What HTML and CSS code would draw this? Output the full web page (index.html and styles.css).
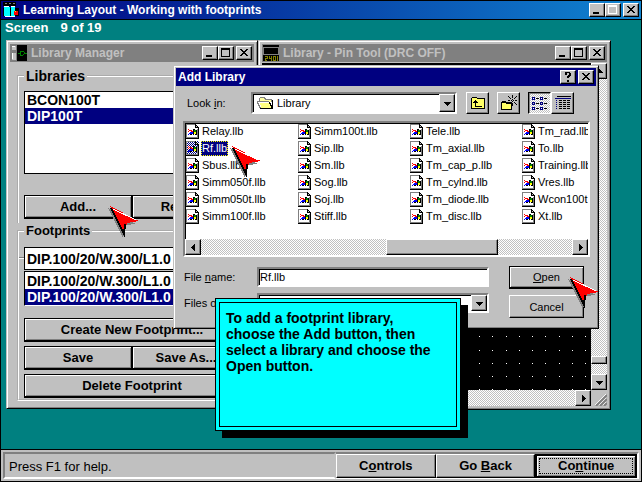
FILE: index.html
```
<!DOCTYPE html>
<html lang="en">
<head>
<meta charset="utf-8">
<title>Learning Layout - Working with footprints</title>
<link rel="stylesheet" href="styles.css">
</head>
<body>
<svg class="defs" width="0" height="0" aria-hidden="true">
  <symbol id="min" viewBox="0 0 12 10"><path d="M2 7h6v2H2z"/></symbol>
  <symbol id="max" viewBox="0 0 12 10"><path fill-rule="evenodd" d="M1 0h9v9H1zM2 2v6h7V2z"/></symbol>
  <symbol id="close" viewBox="0 0 12 10"><path d="M2 1h2v1h1v1h2V2h1V1h2v1H9v1H8v1H7v1h1v1h1v1h1v1H8V7H7V6H5v1H4v1H2V7h1V6h1V5h1V4H4V3H3V2H2z"/></symbol>
  <symbol id="down" viewBox="0 0 7 7"><path d="M0 2h7v1H6v1H5v1H4v1H3V5H2V4H1V3H0z"/></symbol>
  <symbol id="up" viewBox="0 0 7 7"><path d="M3 1h1v1h1v1h1v1h1v1H0V4h1V3h1V2h1z"/></symbol>
  <symbol id="left" viewBox="0 0 7 7"><path d="M5 0v7H4V6H3V5H2V4H1V3h1V2h1V1h1V0z"/></symbol>
  <symbol id="right" viewBox="0 0 7 7"><path d="M2 0v7h1V6h1V5h1V4h1V3H5V2H4V1H3V0z"/></symbol>
  <symbol id="doc" viewBox="0 0 13 15">
    <path fill="#808080" d="M0 0h9v1H1v13H0z"/>
    <path class="page" d="M1 1h8v3h3v10H1z"/>
    <path d="M9 0h1v1h1v1h1v1h1v12H0v-1h12V4H9z"/>
    <path fill="#c0c0c0" d="M10 2h1v1h-1z"/>
    <path fill="#808080" d="M11 5h1v9h-1zM1 13h11v1H1z"/>
    <path fill="red" d="M2 5h1v1H2zM3 6h1v1H3zM2 7h1v1H2zM4 6h2v1H4zM5 7h2v1H5z"/>
    <path fill="#008000" d="M8 6h2v2H8z"/>
    <path fill="#00f" d="M3 9h1v1H3zM2 10h1v1H2zM4 8h3v2H4z"/>
    <path fill="#ff0" d="M8 8h2v2H8z"/>
    <path d="M7 5h2v1H7zM7 6h1v5H7zM10 6h1v5h-1zM4 10h2v1H4zM9 10h1v1H9z"/>
  </symbol>
  <symbol id="pointer" viewBox="0 0 32 32">
    <path fill="#808080" d="M0 2 28 18l-10 1-3 13z"/>
    <path fill="#f00" d="M2 0 31 15l-12 2-3 13z"/>
    <path fill="none" stroke="#000" stroke-width="2" d="M3 2 16 28l1-10"/>
    <path fill="none" stroke="#fff" d="M5 3 28 14"/>
  </symbol>
</svg>

<div class="app">
  <header class="bar app-bar">
    <svg class="app-icon" viewBox="0 0 16 16"><path d="M0 0h13v4H0z"/><path fill="#808080" d="M2 1h2v1H2zM6 1h2v1H6zM10 1h2v1h-2z"/><path d="M0 6h16v8H0z"/><path fill="#0ff" d="M1 5h6v9H1zM8 5h4v9H8z"/><path fill="#fff" d="M1 4h5v1H1zM8 4h4v1H8zM2 14h10v1H2z"/><path fill="red" d="M11 9h4v4h-4z"/><path fill="#ff0" d="M12 9h1v1h-1z"/></svg>
    <h1>Learning Layout - Working with footprints</h1>
    <button class="tb" aria-label="Minimize"><svg><use href="#min"/></svg></button>
    <button class="tb off" aria-label="Maximize" disabled><svg><use href="#max"/></svg></button>
    <button class="tb close" aria-label="Close"><svg><use href="#close"/></svg></button>
  </header>

  <main class="desktop">
    <p class="progress"><span>Screen</span><span>9 of 19</span></p>

    <section class="window manager">
      <header class="bar">
        <svg class="bar-icon" viewBox="0 0 16 16"><path fill="#c0c0c0" d="M1 1h4v4H1zM1 8h4v7H1z"/><path fill="#fff" d="M1 1h3v1H1zM1 8h1v6H1z"/><path d="M6 0h10v16H6z"/><path fill="none" stroke="#008000" d="M7 8h2M9 6h3l2 2-2 2H9zM14 8h2"/></svg>
        <h2>Library Manager</h2>
        <button class="tb" aria-label="Minimize"><svg><use href="#min"/></svg></button>
        <button class="tb" aria-label="Maximize"><svg><use href="#max"/></svg></button>
        <button class="tb close" aria-label="Close"><svg><use href="#close"/></svg></button>
      </header>
      <div class="groups">
        <fieldset class="group libraries">
          <legend>Libraries</legend>
          <ul class="list tall" role="listbox" aria-label="Libraries">
            <li role="option">BCON100T</li>
            <li role="option" aria-selected="true">DIP100T</li>
          </ul>
          <div class="pair"><button class="push">Add...</button><button class="push">Remove</button></div>
        </fieldset>
        <fieldset class="group footprints">
          <legend>Footprints</legend>
          <input class="entry" type="text" aria-label="Footprint" value="DIP.100/20/W.300/L1.0">
          <ul class="list" role="listbox" aria-label="Footprints">
            <li role="option">DIP.100/20/W.300/L1.0</li>
            <li role="option" aria-selected="true">DIP.100/20/W.300/L1.0</li>
          </ul>
          <div class="stack">
            <button class="push">Create New Footprint...</button>
            <div class="pair"><button class="push">Save</button><button class="push">Save As...</button></div>
            <button class="push">Delete Footprint</button>
          </div>
        </fieldset>
      </div>
    </section>

    <section class="window pins">
      <header class="bar">
        <svg class="bar-icon" viewBox="0 0 16 16"><path d="M0 0h16v16H0z"/><path fill="#808080" d="M0 2h16v1H0zM0 9h16v1H0zM0 3h1v6H0zM15 3h1v6h-1z"/><path fill="none" stroke="#808000" d="M2 11h2v2H2v2h2M6 11v2h2M8 11v5M10 11h2v4h-2zM14 11v5"/></svg>
        <h2>Library - Pin Tool (DRC OFF)</h2>
        <button class="tb" aria-label="Minimize"><svg><use href="#min"/></svg></button>
        <button class="tb" aria-label="Maximize"><svg><use href="#max"/></svg></button>
        <button class="tb close" aria-label="Close"><svg><use href="#close"/></svg></button>
      </header>
      <div class="client">
        <div class="canvas">
          <svg class="dots" viewBox="0 0 120 60"><path fill="#fff" d="M8 6h1v1H8zM21 6h1v1h-1zM35 6h1v1h-1zM48 6h1v1h-1zM61 6h1v1h-1zM74 6h1v1h-1zM88 6h1v1h-1zM101 6h1v1h-1zM114 6h1v1h-1zM8 20h1v1H8zM21 20h1v1h-1zM35 20h1v1h-1zM48 20h1v1h-1zM61 20h1v1h-1zM74 20h1v1h-1zM88 20h1v1h-1zM101 20h1v1h-1zM114 20h1v1h-1zM8 33h1v1H8zM21 33h1v1h-1zM35 33h1v1h-1zM48 33h1v1h-1zM61 33h1v1h-1zM74 33h1v1h-1zM88 33h1v1h-1zM101 33h1v1h-1zM114 33h1v1h-1zM8 46h1v1H8zM21 46h1v1h-1zM35 46h1v1h-1zM48 46h1v1h-1zM61 46h1v1h-1zM74 46h1v1h-1zM88 46h1v1h-1zM101 46h1v1h-1zM114 46h1v1h-1zM8 59h1v1H8zM21 59h1v1h-1zM35 59h1v1h-1zM48 59h1v1h-1zM61 59h1v1h-1zM74 59h1v1h-1zM88 59h1v1h-1zM101 59h1v1h-1zM114 59h1v1h-1z"/></svg>
        </div>
        <div class="scroll vertical">
          <button class="arrow" aria-label="Scroll up"><svg><use href="#up"/></svg></button>
          <span class="thumb"></span>
          <button class="arrow" aria-label="Scroll down"><svg><use href="#down"/></svg></button>
        </div>
        <div class="scroll horizontal">
          <button class="arrow end" aria-label="Scroll right"><svg><use href="#right"/></svg></button>
        </div>
        <svg class="grip" viewBox="0 0 16 16"><path stroke="#fff" d="M4 15 15 4M8 15l7-7M12 15l3-3"/><path stroke="#808080" stroke-width="2" d="M5 16 16 5M9 16l7-7M13 16l3-3"/></svg>
      </div>
    </section>

    <section class="window dialog" role="dialog" aria-labelledby="dialog-title">
      <header class="bar">
        <h2 id="dialog-title">Add Library</h2>
        <button class="tb" aria-label="Help"><svg viewBox="0 0 12 10"><path d="M3 0h5v1h1v3H8v1H7v1H5V4h1V3h1V1H5v2H3zM5 8h2v2H5z"/></svg></button>
        <button class="tb close" aria-label="Close"><svg><use href="#close"/></svg></button>
      </header>
      <form class="dialog-body">
        <div class="look">
          <label for="look">Look <u>i</u>n:</label>
          <div class="combo">
            <svg class="folder" viewBox="0 0 17 14"><path fill="#808080" d="M2 2h1V1h5v1h1v1h6v3h-1V4H8V3H7V2H3v3H2zM0 5h12v1H1v1h1v2h1v2h1v2H3v-1H2v-2H1V8H0z"/><path fill="#ffffa0" d="M3 2h4v1h1v1h6v2h-2V5H3z"/><path fill="#ffff80" d="M1 6h11v2h1v2h1v2H4v-1H3V9H2V7H1z"/><path fill="#fff" d="M1 6h11v1H1zM2 7h1v2H2zM3 9h1v2H3z"/><path d="M15 4h1v9H3v-1h11v-2h-1V8h-1V6h1v1h1v2h1z"/></svg>
            <select id="look"><option>Library</option></select>
            <span class="drop"><svg><use href="#down"/></svg></span>
          </div>
          <button type="button" class="tool" aria-label="Up one level"><svg viewBox="0 0 18 16"><path d="M2 3h1V2h5v1h8v11H2z"/><path fill="#ff6" d="M3 3h5v1h7v9H3z"/><path d="M6 5h1v1h1v1h1v1H7v3h6v1H6V8H4V7h1V6h1z"/></svg></button>
          <button type="button" class="tool new" aria-label="New folder"><svg viewBox="0 0 18 16"><path d="M1 7h1V6h4v1h6v8H1z"/><path fill="#ff6" d="M2 8h4v1h5v5H2z"/><path d="M12 0h1v3h-1zM8 1h1v1H8zM9 2h1v1H9zM10 3h1v1h-1zM16 1h1v1h-1zM15 2h1v1h-1zM14 3h1v1h-1zM8 5h2v1H8zM11 5h1v1h-1zM13 5h1v1h-1zM15 5h2v1h-2zM12 4h1v1h-1zM12 6h1v1h-1zM14 7h1v1h-1zM15 8h1v1h-1zM16 9h1v1h-1zM12 8h1v3h-1z"/></svg></button>
          <div class="views">
            <button type="button" class="tool pressed" aria-label="List"><svg viewBox="0 0 18 16"><path fill="#000080" fill-rule="evenodd" d="M1 2h3v3H1zM2 3v1h1V3zM9 2h3v3H9zM10 3v1h1V3zM1 7h3v3H1zM2 8v1h1V8zM9 7h3v3H9zM10 8v1h1V8zM1 12h3v3H1zM2 13v1h1v-1zM9 12h3v3H9zM10 13v1h1v-1z"/><path d="M5 3h3v1H5zM13 3h3v1h-3zM5 8h3v1H5zM13 8h3v1h-3zM5 13h3v1H5zM13 13h3v1h-3z"/></svg></button>
            <button type="button" class="tool" aria-label="Details"><svg viewBox="0 0 18 16"><path d="M3 1h14v1H3zM5 5h3v1H5zM9 5h3v1H9zM13 5h3v1h-3zM5 7h3v1H5zM9 7h3v1H9zM13 7h3v1h-3zM5 9h3v1H5zM9 9h3v1H9zM13 9h3v1h-3zM5 11h3v1H5zM9 11h3v1H9zM13 11h3v1h-3zM5 13h3v1H5zM9 13h3v1H9zM13 13h3v1h-3z"/><path fill="#000080" d="M1 3h16v1H1zM2 5h1v1H2zM2 7h1v1H2zM2 9h1v1H2zM2 11h1v1H2zM2 13h1v1H2z"/></svg></button>
          </div>
        </div>

        <div class="browser">
          <ul class="files" role="listbox" aria-label="Files">
            <li><svg><use href="#doc"/></svg><span>Relay.llb</span></li>
            <li class="picked"><svg><use href="#doc"/></svg><span>Rf.llb</span></li>
            <li><svg><use href="#doc"/></svg><span>Sbus.llb</span></li>
            <li><svg><use href="#doc"/></svg><span>Simm050f.llb</span></li>
            <li><svg><use href="#doc"/></svg><span>Simm050t.llb</span></li>
            <li><svg><use href="#doc"/></svg><span>Simm100f.llb</span></li>
            <li><svg><use href="#doc"/></svg><span>Simm100t.llb</span></li>
            <li><svg><use href="#doc"/></svg><span>Sip.llb</span></li>
            <li><svg><use href="#doc"/></svg><span>Sm.llb</span></li>
            <li><svg><use href="#doc"/></svg><span>Sog.llb</span></li>
            <li><svg><use href="#doc"/></svg><span>Soj.llb</span></li>
            <li><svg><use href="#doc"/></svg><span>Stiff.llb</span></li>
            <li><svg><use href="#doc"/></svg><span>Tele.llb</span></li>
            <li><svg><use href="#doc"/></svg><span>Tm_axial.llb</span></li>
            <li><svg><use href="#doc"/></svg><span>Tm_cap_p.llb</span></li>
            <li><svg><use href="#doc"/></svg><span>Tm_cylnd.llb</span></li>
            <li><svg><use href="#doc"/></svg><span>Tm_diode.llb</span></li>
            <li><svg><use href="#doc"/></svg><span>Tm_disc.llb</span></li>
            <li><svg><use href="#doc"/></svg><span>Tm_rad.llb</span></li>
            <li><svg><use href="#doc"/></svg><span>To.llb</span></li>
            <li><svg><use href="#doc"/></svg><span>Training.llb</span></li>
            <li><svg><use href="#doc"/></svg><span>Vres.llb</span></li>
            <li><svg><use href="#doc"/></svg><span>Wcon100t</span></li>
            <li><svg><use href="#doc"/></svg><span>Xt.llb</span></li>
          </ul>
          <div class="scroll horizontal">
            <button type="button" class="arrow" aria-label="Scroll left"><svg><use href="#left"/></svg></button>
            <span class="thumb"></span>
            <button type="button" class="arrow" aria-label="Scroll right"><svg><use href="#right"/></svg></button>
          </div>
        </div>

        <div class="finish">
          <div class="fields">
            <label for="name">File <u>n</u>ame:</label>
            <input id="name" class="entry" type="text" value="Rf.llb">
            <label for="type">Files of</label>
            <div class="combo"><select id="type"><option></option></select><span class="drop"><svg><use href="#down"/></svg></span></div>
          </div>
          <div class="actions">
            <button type="button" class="push"><u>O</u>pen</button>
            <button type="button" class="push plain">Cancel</button>
          </div>
        </div>
      </form>
    </section>

    <aside class="callout"><p>To add a footprint library, choose the Add button, then select a library and choose the Open button.</p></aside>

    <svg class="pointer at-add"><use href="#pointer"/></svg>
    <svg class="pointer at-file"><use href="#pointer"/></svg>
    <svg class="pointer at-open"><use href="#pointer"/></svg>
  </main>

  <footer class="status">
    <p>Press F1 for help.</p>
    <nav>
      <button class="push plain">C<u>o</u>ntrols</button>
      <button class="push plain">Go <u>B</u>ack</button>
      <button class="push focus">Co<u>n</u>tinue</button>
    </nav>
  </footer>
</div>
</body>
</html>
```
FILE: styles.css
```
* { box-sizing: border-box; }
:root {
  --face: #c0c0c0;
  --dark: #808080;
  --navy: #000080;
  --mesh: repeating-conic-gradient(#fff 0 25%, #c0c0c0 0 50%) 0 0 / 2px 2px;
}
body { margin: 0; font: bold 13px/16px "Liberation Sans", sans-serif; color: #000; overflow: hidden; }
h1, h2, p, ul { margin: 0; padding: 0; list-style: none; }
button, input, select { font: inherit; color: inherit; margin: 0; padding: 0; border-radius: 0; }
svg { shape-rendering: crispEdges; flex: none; display: block; }
.defs { position: absolute; }

.app { display: flex; flex-direction: column; height: 100vh; border: 1px solid #000; }

/* title bars */
.bar { display: flex; align-items: center; height: 18px; padding: 0 2px 0 1px; background: var(--dark); color: var(--face); white-space: nowrap; }
.bar h1, .bar h2 { flex: 1; font-size: 12px; line-height: 18px; padding-left: 4px; }
.app-bar { height: 19px; padding-left: 2px; background: linear-gradient(90deg, #000080, #1084d0); color: #fff; border-bottom: 1px solid #000; }
.app-icon, .bar-icon { width: 16px; height: 16px; }
.tb { width: 16px; height: 14px; background: var(--face); color: #000; border: 1px solid; border-color: #fff #000 #000 #fff; box-shadow: inset -1px -1px var(--dark); padding: 1px; }
.tb svg { width: 12px; height: 10px; }
.tb.close { margin-left: 2px; }
.tb.off svg { fill: #fff; }

/* desktop */
.desktop { position: relative; flex: 1; background: #008080; overflow: hidden; }
.progress { display: flex; gap: 12px; color: #fff; padding: 0 4px; line-height: 15px; }
.window { position: absolute; background: var(--face); border: 1px solid; border-color: var(--face) #000 #000 var(--face); box-shadow: inset 1px 1px #fff, inset -1px -1px var(--dark); padding: 3px; }
.manager { left: 5px; top: 20px; width: 252px; }
.pins { left: 257px; top: 20px; width: 353px; height: 370px; display: flex; flex-direction: column; }
.dialog { left: 172px; top: 45px; width: 426px; padding: 2px; }

/* buttons */
.push { flex: 1; height: 24px; background: var(--face); border: 1px solid #000; border-bottom-width: 2px; box-shadow: inset 1px 1px #fff, inset -1px -1px var(--dark); white-space: nowrap; overflow: hidden; }
.push.plain { border-color: #fff #000 #000 #fff; border-bottom-width: 1px; box-shadow: inset -1px -1px var(--dark); }
.pair { display: flex; }

/* library manager */
.groups { padding: 6px 7px 4px; }
.group { margin: 0; min-width: 0; border: 2px groove #fff; padding: 7px 5px 4px; }
.group legend { padding: 0 2px; }
.libraries { border-bottom: 0; }
.libraries legend { font-size: 14px; }
.footprints { position: relative; padding: 8px 5px 1px; }
.footprints::before { content: ""; position: absolute; left: 0; top: 18px; width: 5px; height: 2px; background: linear-gradient(var(--dark) 50%, #fff 50%); }
.list, .entry { display: block; width: 100%; background: #fff; border: 1px solid; border-color: #000 #fff #fff #000; font-size: 14px; }
.list li { height: 16px; padding-left: 2px; overflow: hidden; white-space: nowrap; }
.list [aria-selected] { background: var(--navy); color: #fff; }
.list.tall { height: 83px; border-color: #000; margin-bottom: 21px; }
.footprints .entry { height: 23px; padding-left: 2px; border-color: #000; }
.footprints .list { margin: 1px 0 12px; padding: 1px 0 0; }
.stack { display: flex; flex-direction: column; gap: 4px; }
.stack > .push { flex: none; }

/* pin tool */
.client { flex: 1; display: grid; grid-template: 1fr 16px / 1fr 16px; border-top: 1px solid var(--face); }
.canvas { background: #000; display: flex; justify-content: flex-end; align-items: flex-end; }
.dots { width: 120px; height: 60px; }
.scroll { display: flex; background: var(--mesh); }
.vertical { flex-direction: column; justify-content: space-between; }
.arrow, .drop { display: flex; align-items: center; justify-content: center; width: 16px; height: 16px; flex: none; background: var(--face); border: 1px solid; border-color: #fff #000 #000 #fff; box-shadow: inset -1px -1px var(--dark); }
.arrow svg, .drop svg { width: 7px; height: 7px; }
.arrow.end { margin-left: auto; }
.thumb { background: var(--face); border: 1px solid; border-color: #fff #000 #000 #fff; box-shadow: inset -1px -1px var(--dark); }
.vertical .thumb { height: 8px; margin: auto 0 10px; }
.grip { width: 16px; height: 16px; fill: none; shape-rendering: auto; }

/* add library dialog */
.dialog .bar { background: var(--navy); color: #fff; }
.dialog .bar h2 { padding-left: 1px; font-size: 12px; }
.dialog-body { font-size: 11px; font-weight: normal; padding: 6px 6px 8px 7px; }
.look { display: flex; align-items: center; height: 22px; }
.look label { width: 68px; padding-left: 4px; }
.combo { display: flex; align-items: center; height: 20px; background: #fff; border: 2px solid; border-color: var(--dark) #fff #fff var(--dark); box-shadow: inset 1px 1px #000; padding-left: 2px; }
.combo select { flex: 1; min-width: 0; appearance: none; border: 0; background: none; padding-left: 3px; }
.look .combo { width: 206px; height: 22px; margin-right: 9px; padding-left: 4px; }
.folder { width: 17px; height: 14px; }
.drop { height: 100%; }
.tool { display: flex; align-items: center; justify-content: center; width: 23px; height: 22px; background: var(--face); border: 1px solid; border-color: #fff #000 #000 #fff; box-shadow: inset -1px -1px var(--dark); }
.tool svg { width: 18px; height: 16px; }
.tool.new { margin: 0 8px; }
.tool.pressed { background: var(--mesh); border-color: #000 #fff #fff #000; box-shadow: inset 1px 1px var(--dark); }
.views { display: flex; }
.browser { display: flex; flex-direction: column; height: 136px; margin-top: 7px; background: #fff; border: 2px solid; border-color: var(--dark) #fff #fff var(--dark); box-shadow: inset 1px 1px #000; }
.files { flex: 1; display: grid; grid-template-rows: repeat(6, 17px); grid-auto-columns: 112px; grid-auto-flow: column; overflow: hidden; padding-left: 1px; }
.files li { display: flex; align-items: center; gap: 2px; }
.files svg { width: 13px; height: 15px; fill: #000; --page: #fff; }
.page { fill: var(--page); }
.files span { padding: 0 1px; line-height: 15px; white-space: nowrap; }
.files .picked span { background: var(--navy); color: #fff; outline: 1px dotted #ff0; outline-offset: -1px; }
.files .picked svg { --page: transparent; background: repeating-conic-gradient(#000080 0 25%, #fff 0 50%) 0 0 / 2px 2px; }
.browser .thumb { width: 112px; margin: 0 74px 0 auto; }
.finish { display: flex; justify-content: space-between; padding: 9px 6px 0 1px; }
.fields { display: grid; grid-template-columns: 73px 232px; grid-auto-rows: 20px; gap: 6px 0; align-items: center; padding-top: 1px; white-space: nowrap; }
.fields .entry { height: 20px; font-size: 11px; padding-left: 1px; border-width: 2px; border-color: var(--dark) #fff #fff var(--dark); box-shadow: inset 1px 1px #000; }
.actions { display: flex; flex-direction: column; gap: 6px; width: 75px; }
.actions .push { flex: none; height: 23px; }

/* callout and pointers */
.callout { position: absolute; left: 214px; top: 278px; width: 246px; height: 133px; padding: 3px; background: #0ff; border: 1px solid #000; box-shadow: 7px 7px #000; font-size: 14px; }
.callout p { height: 100%; border: 1px solid #000; padding: 7px 18px 7px 6px; }
.pointer { position: absolute; width: 32px; height: 32px; }
.at-add { left: 107px; top: 186px; }
.at-file { left: 229px; top: 126px; }
.at-open { left: 567px; top: 257px; }

/* status bar */
.status { display: flex; align-items: center; height: 32px; background: var(--face); border-top: 1px solid #000; padding: 2px; font-weight: normal; }
.status p { flex: 1; align-self: stretch; line-height: 25px; padding-left: 4px; border: 2px solid; border-color: var(--dark) transparent #fff var(--dark); }
.status nav { display: flex; align-self: stretch; width: 303px; border: 2px solid; border-color: var(--dark) #fff #fff transparent; border-left: 0; font-weight: bold; }
.status .push { height: 24px; }
.push.focus { border-width: 2px; outline: 1px dotted #000; outline-offset: -5px; }
```
